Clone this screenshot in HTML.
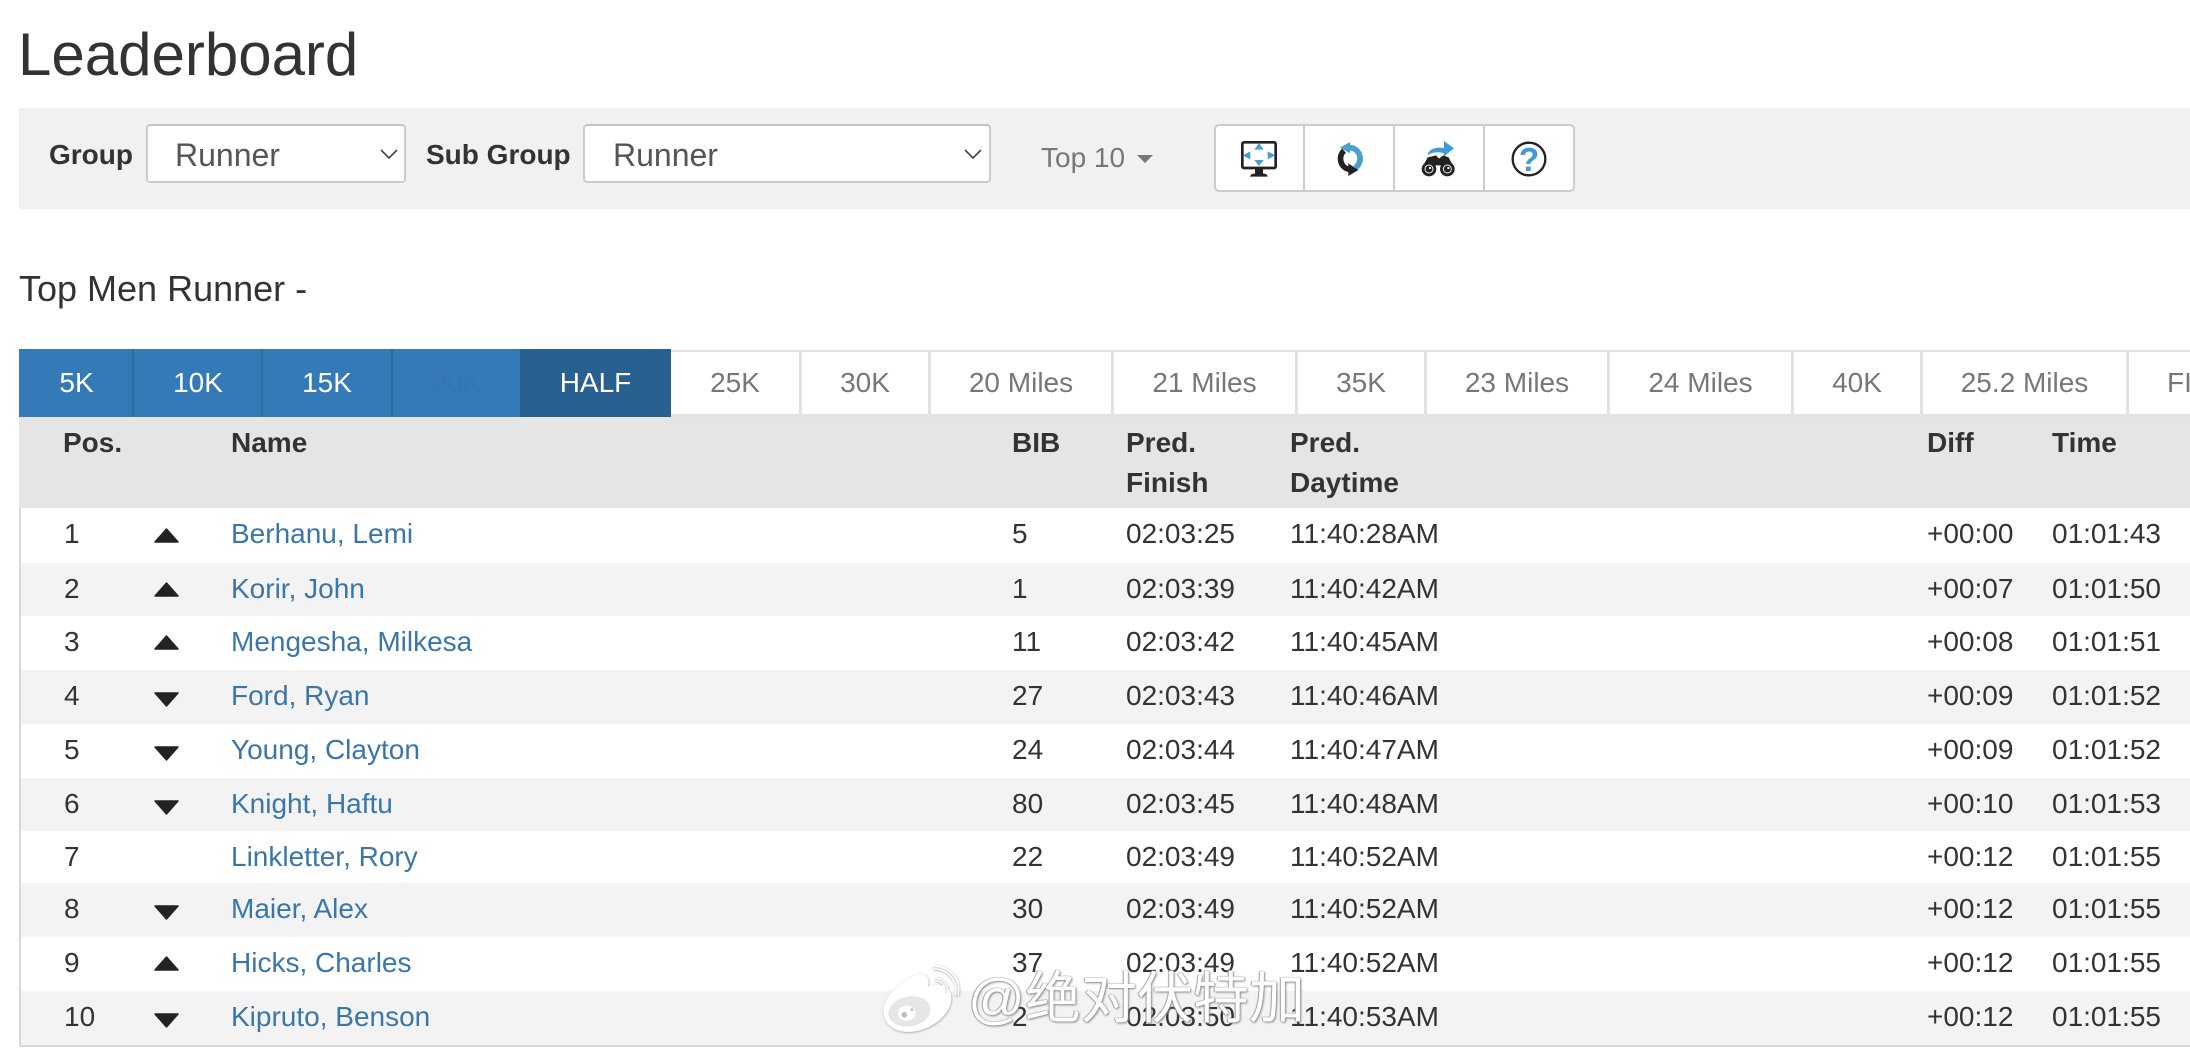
<!DOCTYPE html>
<html lang="en">
<head>
<meta charset="utf-8">
<title>Leaderboard</title>
<style>
html,body{margin:0;padding:0;background:#fff;}
body{width:2190px;height:1052px;overflow:hidden;position:relative;font-family:"Liberation Sans",sans-serif;color:#333;}
.abs{position:absolute;white-space:nowrap;}
h1{position:absolute;left:18px;top:21px;margin:0;font-size:60px;font-weight:400;line-height:68px;color:#333;}
.bar{position:absolute;left:19px;top:108px;width:2171px;height:101px;background:#f1f1f1;}
.lbl{position:absolute;font-size:28px;font-weight:700;line-height:40px;top:135px;color:#333;}
select{position:absolute;top:124px;height:59px;box-sizing:border-box;border:2px solid #ccc;border-top-color:#c4c4c4;border-radius:4px;background:#fff;-webkit-appearance:none;appearance:none;font-family:"Liberation Sans",sans-serif;font-size:32px;color:#555;padding:2px 0 0 27px;outline:0;}
.top10{position:absolute;left:1041px;top:138px;font-size:28px;line-height:40px;color:#777;}
.btns{position:absolute;left:1214px;top:124px;width:361px;height:68px;box-sizing:border-box;border:2px solid #ccc;border-radius:5px;background:#fff;}
.btns i{position:absolute;top:0;bottom:0;width:2px;background:#ccc;}
h3{position:absolute;left:19px;top:268px;margin:0;font-size:36px;font-weight:400;line-height:42px;color:#333;}
.tabs{position:absolute;left:0;top:0;}
.t{position:absolute;top:349px;height:68px;box-sizing:border-box;text-align:center;font-size:28px;line-height:68px;padding-top:0;white-space:nowrap;overflow:hidden;}
.t.b{background:#337ab7;color:#fff;border-right:2px solid #2e6da4;}
.t.a{background:#28608f;color:#fff;}
.t.w{top:350px;height:67px;line-height:62px;background:#fff;color:#777;border-top:2px solid #e2e2e2;border-bottom:3px solid #e2e2e2;border-right:3px solid #e2e2e2;}
table{position:absolute;left:19px;top:417px;width:2171px;border-collapse:collapse;table-layout:fixed;font-size:28px;line-height:40px;}
th,td{padding:6px 0 0 0;text-align:left;vertical-align:top;white-space:nowrap;position:relative;}
th{background:#e5e5e5;font-weight:700;padding-top:6px;height:85px;box-sizing:content-box;}
td.p{padding-left:45px;}
th.p{padding-left:44px;}
tr.s td{background:#f3f3f3;}
td a{color:#3a77a8;text-decoration:none;}
.leftline{position:absolute;left:19px;top:508px;width:2px;height:539px;background:#d8d8d8;}
.botline{position:absolute;left:19px;top:1045px;width:2171px;height:2px;background:#d8d8d8;}
.ar{position:absolute;left:135px;}
.wm{position:absolute;left:968px;top:963px;font-family:"Liberation Sans","Noto Sans CJK SC",sans-serif;font-size:56px;line-height:72px;color:#fff;white-space:nowrap;text-shadow:0 0 1px #777,1px 1px 2px #8a8a8a,-1px 0 1px #aaa;}
</style>
</head>
<body>
<h1>Leaderboard</h1>

<div class="bar"></div>
<div class="lbl" style="left:49px">Group</div>
<select style="left:146px;width:260px"><option>Runner</option></select>
<svg class="abs" style="left:379px;top:148px" width="20" height="12" viewBox="0 0 20 12"><polyline points="2,2 10,10 18,2" fill="none" stroke="#444" stroke-width="1.6"/></svg>
<div class="lbl" style="left:426px">Sub Group</div>
<select style="left:583px;width:408px;padding-left:28px"><option>Runner</option></select>
<svg class="abs" style="left:963px;top:148px" width="20" height="12" viewBox="0 0 20 12"><polyline points="2,2 10,10 18,2" fill="none" stroke="#444" stroke-width="1.6"/></svg>
<div class="top10">Top 10</div>
<svg class="abs" style="left:1137px;top:155px" width="16" height="8" viewBox="0 0 16 8"><path d="M0 0H16L8 8Z" fill="#777"/></svg>

<div class="btns">
<i style="left:87px"></i><i style="left:177px"></i><i style="left:267px"></i>
</div>
<svg class="abs" style="left:1100px;top:80px" width="500" height="160" viewBox="0 0 1500 480">
  <!-- monitor -->
  <rect x="427" y="187" width="100" height="77" rx="5" fill="#fff" stroke="#222" stroke-width="8"/>
  <rect x="465" y="266" width="24" height="17" fill="#222"/>
  <path d="M450 290 Q452 281 462 281H491Q501 281 503 290Z" fill="#222"/>
  <path d="M477 189L463 209H491Z M477 258L463 240H491Z M428 226L451 214V238Z M526 226L503 214V238Z" fill="#4a9fd0"/>
  <!-- refresh -->
  <path d="M745 203A32 33 0 0 1 765 264" fill="none" stroke="#4a9fd0" stroke-width="17"/>
  <path d="M720 203L750 186V220Z" fill="#4a9fd0"/>
  <path d="M732 212A30 32 0 0 0 748 268" fill="none" stroke="#222" stroke-width="17"/>
  <path d="M775 270L745 250V288Z" fill="#222"/>
  <!-- binoculars -->
  <path d="M983 226C986 206 1008 200 1032 204V183L1062 205L1032 229V220C1012 214 996 217 983 226Z" fill="#3f9bd5"/>
  <path d="M970 256L983 232L1008 226L1017 236L1030 226L1046 232L1058 256Z" fill="#222"/>
  <circle cx="987" cy="267" r="22" fill="#222"/>
  <circle cx="1042" cy="267" r="22" fill="#222"/>
  <circle cx="987" cy="267" r="12" fill="#222" stroke="#eee" stroke-width="3"/>
  <circle cx="1042" cy="267" r="12" fill="#222" stroke="#eee" stroke-width="3"/>
  <circle cx="990" cy="264" r="3.5" fill="#fff"/>
  <circle cx="1045" cy="264" r="3.5" fill="#fff"/>
  <!-- help -->
  <circle cx="1287" cy="237" r="49" fill="#fff" stroke="#222" stroke-width="7"/>
  <text x="1287" y="273" text-anchor="middle" font-family="Liberation Sans, sans-serif" font-weight="700" font-size="100" fill="#3f9bd5">?</text>
</svg>

<h3>Top Men Runner -</h3>

<div class="tabs">
<div class="t b" style="left:19px;width:115px;padding-left:2px">5K</div>
<div class="t b" style="left:134px;width:129px;padding-left:1px">10K</div>
<div class="t b" style="left:263px;width:130px">15K</div>
<div class="t b" style="left:393px;width:127px;color:#3675b3;border-right:0">20K</div>
<div class="t a" style="left:520px;width:151px">HALF</div>
<div class="t w" style="left:671px;width:131px">25K</div>
<div class="t w" style="left:802px;width:129px">30K</div>
<div class="t w" style="left:931px;width:183px">20 Miles</div>
<div class="t w" style="left:1114px;width:184px">21 Miles</div>
<div class="t w" style="left:1298px;width:129px">35K</div>
<div class="t w" style="left:1427px;width:183px">23 Miles</div>
<div class="t w" style="left:1610px;width:184px">24 Miles</div>
<div class="t w" style="left:1794px;width:129px">40K</div>
<div class="t w" style="left:1923px;width:206px">25.2 Miles</div>
<div class="t w" style="left:2129px;width:150px;border-right:0;text-align:left;padding-left:38px">FINISH</div>
</div>

<table>
<colgroup>
<col style="width:212px"><col style="width:781px"><col style="width:114px"><col style="width:164px"><col style="width:637px"><col style="width:125px"><col style="width:138px">
</colgroup>
<thead>
<tr><th class="p">Pos.</th><th>Name</th><th>BIB</th><th>Pred.<br>Finish</th><th>Pred.<br>Daytime</th><th>Diff</th><th>Time</th></tr>
</thead>
<tbody>
<tr style="height:55px"><td class="p">1<svg class="ar" style="top:20px" width="25" height="15" viewBox="0 0 25 15"><path d="M1 14L12.5 1L24 14Z" fill="#222" stroke="#222" stroke-width="1.5" stroke-linejoin="round"/></svg></td><td><a href="#">Berhanu, Lemi</a></td><td>5</td><td>02:03:25</td><td>11:40:28AM</td><td>+00:00</td><td>01:01:43</td></tr>
<tr class="s" style="height:53px"><td class="p">2<svg class="ar" style="top:19px" width="25" height="15" viewBox="0 0 25 15"><path d="M1 14L12.5 1L24 14Z" fill="#222" stroke="#222" stroke-width="1.5" stroke-linejoin="round"/></svg></td><td><a href="#">Korir, John</a></td><td>1</td><td>02:03:39</td><td>11:40:42AM</td><td>+00:07</td><td>01:01:50</td></tr>
<tr style="height:54px"><td class="p">3<svg class="ar" style="top:19px" width="25" height="15" viewBox="0 0 25 15"><path d="M1 14L12.5 1L24 14Z" fill="#222" stroke="#222" stroke-width="1.5" stroke-linejoin="round"/></svg></td><td><a href="#">Mengesha, Milkesa</a></td><td>11</td><td>02:03:42</td><td>11:40:45AM</td><td>+00:08</td><td>01:01:51</td></tr>
<tr class="s" style="height:54px"><td class="p">4<svg class="ar" style="top:22px" width="25" height="15" viewBox="0 0 25 15"><path d="M1 1L12.5 14L24 1Z" fill="#222" stroke="#222" stroke-width="1.5" stroke-linejoin="round"/></svg></td><td><a href="#">Ford, Ryan</a></td><td>27</td><td>02:03:43</td><td>11:40:46AM</td><td>+00:09</td><td>01:01:52</td></tr>
<tr style="height:54px"><td class="p">5<svg class="ar" style="top:22px" width="25" height="15" viewBox="0 0 25 15"><path d="M1 1L12.5 14L24 1Z" fill="#222" stroke="#222" stroke-width="1.5" stroke-linejoin="round"/></svg></td><td><a href="#">Young, Clayton</a></td><td>24</td><td>02:03:44</td><td>11:40:47AM</td><td>+00:09</td><td>01:01:52</td></tr>
<tr class="s" style="height:53px"><td class="p">6<svg class="ar" style="top:22px" width="25" height="15" viewBox="0 0 25 15"><path d="M1 1L12.5 14L24 1Z" fill="#222" stroke="#222" stroke-width="1.5" stroke-linejoin="round"/></svg></td><td><a href="#">Knight, Haftu</a></td><td>80</td><td>02:03:45</td><td>11:40:48AM</td><td>+00:10</td><td>01:01:53</td></tr>
<tr style="height:52px"><td class="p">7</td><td><a href="#">Linkletter, Rory</a></td><td>22</td><td>02:03:49</td><td>11:40:52AM</td><td>+00:12</td><td>01:01:55</td></tr>
<tr class="s" style="height:54px"><td class="p">8<svg class="ar" style="top:22px" width="25" height="15" viewBox="0 0 25 15"><path d="M1 1L12.5 14L24 1Z" fill="#222" stroke="#222" stroke-width="1.5" stroke-linejoin="round"/></svg></td><td><a href="#">Maier, Alex</a></td><td>30</td><td>02:03:49</td><td>11:40:52AM</td><td>+00:12</td><td>01:01:55</td></tr>
<tr style="height:54px"><td class="p">9<svg class="ar" style="top:19px" width="25" height="15" viewBox="0 0 25 15"><path d="M1 14L12.5 1L24 14Z" fill="#222" stroke="#222" stroke-width="1.5" stroke-linejoin="round"/></svg></td><td><a href="#">Hicks, Charles</a></td><td>37</td><td>02:03:49</td><td>11:40:52AM</td><td>+00:12</td><td>01:01:55</td></tr>
<tr class="s" style="height:54px"><td class="p">10<svg class="ar" style="top:22px" width="25" height="15" viewBox="0 0 25 15"><path d="M1 1L12.5 14L24 1Z" fill="#222" stroke="#222" stroke-width="1.5" stroke-linejoin="round"/></svg></td><td><a href="#">Kipruto, Benson</a></td><td>2</td><td>02:03:50</td><td>11:40:53AM</td><td>+00:12</td><td>01:01:55</td></tr>
</tbody>
</table>
<div class="leftline"></div>
<div class="botline"></div>

<svg class="abs" style="left:868px;top:955px" width="206" height="82" viewBox="0 0 600 240">
  <defs><filter id="sh" x="-10%" y="-10%" width="120%" height="120%"><feDropShadow dx="1" dy="2" stdDeviation="3" flood-color="#777" flood-opacity=".7"/></filter></defs>
  <g filter="url(#sh)">
    <path d="M44 170C38 130 85 85 130 62C160 48 182 60 174 92C208 80 244 92 242 130C240 182 170 228 110 225C72 223 48 202 44 170Z" fill="#fff"/>
    <path d="M190 36C235 38 268 72 258 118" fill="none" stroke="#fff" stroke-width="13"/>
    <path d="M196 72C218 72 232 90 226 112" fill="none" stroke="#fff" stroke-width="11"/>
  </g>
  <path d="M190 36C235 38 268 72 258 118" fill="none" stroke="#ddd" stroke-width="5"/>
  <path d="M196 72C218 72 232 90 226 112" fill="none" stroke="#ddd" stroke-width="4"/>
  <ellipse cx="120" cy="165" rx="62" ry="44" fill="#e6e6e6" transform="rotate(-10 120 165)"/>
  <ellipse cx="112" cy="170" rx="26" ry="22" fill="#fff"/>
  <circle cx="105" cy="175" r="8" fill="#bbb"/>
  <circle cx="127" cy="160" r="4" fill="#bbb"/>
</svg>
<div class="wm">@绝对伏特加</div>
</body>
</html>
